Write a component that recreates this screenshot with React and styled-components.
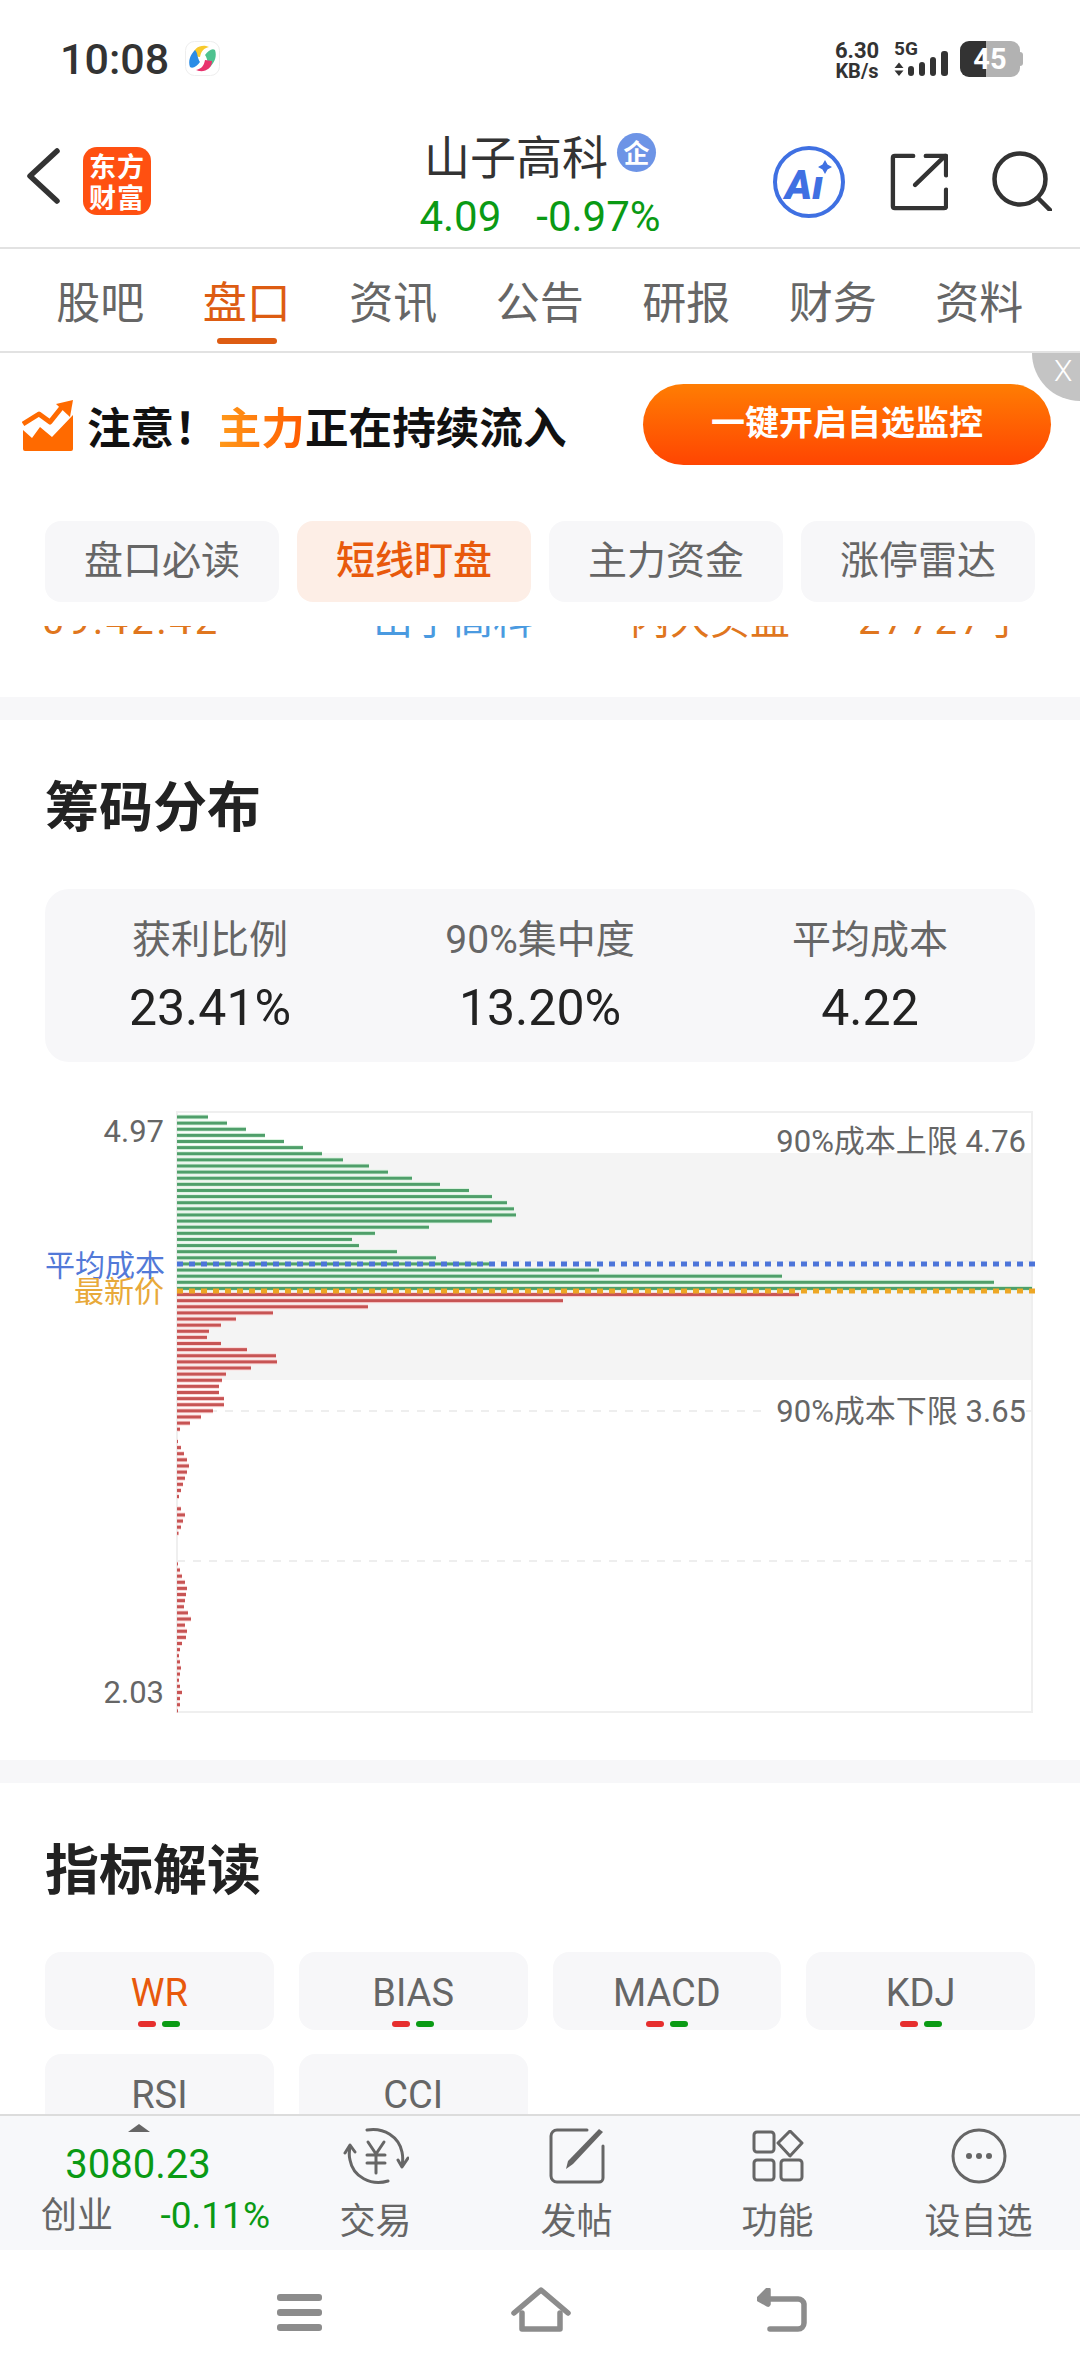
import React from 'react'
import styled, { createGlobalStyle } from 'styled-components'

const GlobalStyle = createGlobalStyle`
  html, body { margin: 0; padding: 0; background: #fff; }
  body { font-family: Roboto, "Noto Sans CJK SC", sans-serif; }
  * { box-sizing: border-box; }
`

const GREEN = '#0a9a14'
const ORANGE = '#e8590c'

const tabs = ['股吧', '盘口', '资讯', '公告', '研报', '财务', '资料']
const chips = ['盘口必读', '短线盯盘', '主力资金', '涨停雷达']
const stats = [
  { label: '获利比例', value: '23.41%' },
  { label: '90%集中度', value: '13.20%' },
  { label: '平均成本', value: '4.22' },
]
const indicators = ['WR', 'BIAS', 'MACD', 'KDJ', 'RSI', 'CCI']

// bar lengths of the chip distribution, top to bottom
const greenBars = [31, 50, 69, 88, 107, 126, 145, 166, 192, 211, 235, 263, 292, 315, 330, 337, 339, 315, 252, 198, 175, 182, 220, 259, 314, 422, 605, 817, 855]
const redBars = [622, 386, 191, 96, 59, 44, 32, 30, 44, 70, 99, 100, 74, 49, 45, 42, 42, 47, 47, 36, 24, 13, 3, 0, 1, 4, 7, 10, 12, 10, 8, 6, 4, 2, 0, 4, 8, 6, 4, 1.5, 0, 0, 0, 0, 1, 3, 5, 8, 10, 9, 8, 7, 11, 14, 8, 10, 9, 5, 3, 2, 3, 4, 3, 2, 3, 5, 3, 3, 1]

const Page = styled.div`
  width: 1080px;
  height: 2376px;
  display: flex;
  flex-direction: column;
  overflow: hidden;
  background: #fff;
  color: #333;
`

const StatusBar = styled.div`
  height: 115px;
  flex: none;
  display: flex;
  align-items: flex-start;
  padding: 39px 60px 0 60px;
`

const Clock = styled.div`
  font-size: 43px;
  line-height: 40px;
  font-weight: 500;
  color: #333;
`

const StatusRight = styled.div`
  margin-left: auto;
  display: flex;
  align-items: flex-start;
  padding-top: 2px;
`

const Speed = styled.div`
  width: 48px;
  margin-right: 13px;
  text-align: center;
  font-weight: 700;
  color: #333;
  white-space: nowrap;
  display: flex;
  flex-direction: column;
  align-items: center;
`

const SpeedValue = styled.span`
  font-size: 22px;
  line-height: 20px;
`

const SpeedUnit = styled.span`
  font-size: 20px;
  line-height: 21px;
`

const Battery = styled.div`
  width: 60px;
  height: 36px;
  margin-left: 10px;
  border-radius: 9px;
  background: linear-gradient(90deg, #333 0 26px, #b2b2b2 26px 100%);
  color: #fff;
  font-size: 29px;
  line-height: 36px;
  font-weight: 700;
  text-align: center;
  position: relative;
  &::after {
    content: '';
    position: absolute;
    right: -3px;
    top: 11px;
    width: 3px;
    height: 14px;
    border-radius: 0 3px 3px 0;
    background: #b2b2b2;
  }
`

const Header = styled.div`
  height: 134px;
  flex: none;
  display: grid;
  grid-template-columns: 1fr auto 1fr;
  border-bottom: 2px solid #e2e2e2;
`

const HeaderLeft = styled.div`
  display: flex;
  align-items: flex-start;
  padding: 32px 0 0 25px;
  gap: 22px;
`

const Logo = styled.div`
  width: 68px;
  height: 68px;
  border-radius: 14px;
  background: #ff5011;
  color: #fff;
  font-size: 27px;
  line-height: 31px;
  font-weight: 700;
  text-align: center;
  padding-top: 3px;
  letter-spacing: 1px;
  font-family: "Noto Sans CJK SC", sans-serif;
`

const HeaderCenter = styled.div`
  display: flex;
  flex-direction: column;
  align-items: center;
  padding-top: 11px;
`

const TitleRow = styled.div`
  display: flex;
  align-items: center;
  gap: 9px;
  height: 56px;
  font-size: 46px;
  color: #333;
  font-family: "Noto Sans CJK SC", sans-serif;
`

const Badge = styled.span`
  width: 39px;
  height: 39px;
  border-radius: 50%;
  background: #6d94e6;
  color: #fff;
  font-size: 26px;
  font-weight: 700;
  line-height: 38px;
  text-align: center;
  margin-top: -3px;
`

const PriceRow = styled.div`
  display: flex;
  gap: 35px;
  margin-top: 13px;
  font-size: 42px;
  line-height: 44px;
  color: ${GREEN};
`

const HeaderRight = styled.div`
  display: flex;
  justify-content: flex-end;
  align-items: flex-start;
  padding: 30px 28px 0 0;
  gap: 44px;
`

const TabBar = styled.div`
  height: 104px;
  flex: none;
  display: flex;
  padding: 0 27px;
  border-bottom: 2px solid #e2e2e2;
`

const Tab = styled.div`
  flex: 0 0 146.5px;
  position: relative;
  text-align: center;
  padding-top: 29px;
  font-size: 44px;
  line-height: 52px;
  color: ${({ $active }) => ($active ? '#dd5c12' : '#666')};
  &::after {
    content: '';
    display: ${({ $active }) => ($active ? 'block' : 'none')};
    position: absolute;
    left: 43px;
    top: 89px;
    width: 60px;
    height: 6px;
    border-radius: 3px;
    background: #dd5c12;
  }
`

const Banner = styled.div`
  height: 168px;
  flex: none;
  position: relative;
  display: flex;
  align-items: flex-start;
  padding: 31px 29px 0 22px;
`

const BannerText = styled.div`
  height: 81px;
  margin-left: 14px;
  display: flex;
  align-items: center;
  padding-top: 1px;
  font-size: 43.6px;
  font-weight: 700;
  color: #111;
  font-family: "Noto Sans CJK SC", sans-serif;
`

const Hot = styled.span`
  background: linear-gradient(90deg, #ff9a1a, #ff5a00);
  -webkit-background-clip: text;
  background-clip: text;
  color: transparent;
`

const MonitorButton = styled.div`
  margin-left: auto;
  width: 408px;
  height: 81px;
  border-radius: 41px;
  background: linear-gradient(180deg, #ff7d03, #ff4502);
  color: #fff;
  font-size: 34px;
  font-weight: 700;
  line-height: 78px;
  text-align: center;
`

const CloseCorner = styled.div`
  position: absolute;
  top: 0;
  right: 0;
  width: 48px;
  height: 48px;
  border-radius: 0 0 0 48px;
  background: #c4c4c4;
  color: #fff;
  font-size: 30px;
  line-height: 24px;
  padding: 6px 0 0 22px;
  font-weight: 300;
`

const ChipRow = styled.div`
  height: 81px;
  flex: none;
  display: grid;
  grid-template-columns: repeat(4, 1fr);
  gap: 18px;
  padding: 0 45px;
`

const Chip = styled.div`
  border-radius: 16px;
  background: ${({ $active }) => ($active ? '#fdeee6' : '#f7f7f9')};
  color: ${({ $active }) => ($active ? ORANGE : '#666')};
  font-weight: ${({ $active }) => ($active ? 500 : 400)};
  font-size: 39px;
  line-height: 81px;
  text-align: center;
`

const Scroll = styled.div`
  flex: 1;
  min-height: 0;
  overflow: hidden;
`

const ClippedList = styled.div`
  margin-top: 24px;
  height: 71px;
  overflow: hidden;
`

const ClippedRow = styled.div`
  margin-top: -27px;
  padding-left: 42px;
  display: grid;
  grid-template-columns: 331px 257px 228px auto;
  font-size: 40px;
  line-height: 44px;
  color: #e0761e;
`

const ClippedCell = styled.span`
  letter-spacing: ${({ $ls }) => $ls || 0}px;
  color: ${({ $blue }) => ($blue ? '#4a9ae0' : 'inherit')};
`

const Gap = styled.div`
  height: 23px;
  background: #f7f7f9;
`

const Section = styled.div`
  padding: 56px 45px ${({ $bottom }) => $bottom}px;
`

const SectionTitle = styled.h2`
  margin: 0 0 ${({ $gap }) => $gap}px;
  font-size: 54px;
  line-height: 56px;
  font-weight: 700;
  color: #222;
  font-family: "Noto Sans CJK SC", sans-serif;
`

const StatCard = styled.div`
  height: 173px;
  border-radius: 24px;
  background: #f7f7f9;
  display: grid;
  grid-template-columns: repeat(3, 1fr);
  padding-top: 27px;
`

const Stat = styled.div`
  text-align: center;
`

const StatLabel = styled.div`
  font-size: 39px;
  line-height: 48px;
  color: #666;
`

const StatValue = styled.div`
  font-size: 50px;
  line-height: 60px;
  margin-top: 14px;
  font-weight: 400;
  color: #222;
`

const Chart = styled.div`
  position: relative;
  height: 602px;
  margin-top: 49px;
`

const ChartSvg = styled.svg`
  display: block;
  width: 990px;
  height: 602px;
`

const AxisLabel = styled.div`
  position: absolute;
  left: 0;
  top: ${({ $top }) => $top}px;
  width: 119px;
  text-align: right;
  font-size: ${({ $size }) => $size || 30}px;
  line-height: 36px;
  white-space: nowrap;
  color: ${({ $color }) => $color || '#666'};
`

const BandLabel = styled.div`
  position: absolute;
  right: 9px;
  top: ${({ $top }) => $top}px;
  padding-left: 8px;
  font-size: 31px;
  line-height: 36px;
  color: #666;
  background: ${({ $plain }) => ($plain ? 'transparent' : '#fff')};
`

const IndicatorGrid = styled.div`
  display: grid;
  grid-template-columns: repeat(4, 1fr);
  gap: 24px 25px;
`

const Indicator = styled.div`
  height: 78px;
  border-radius: 16px;
  background: #f7f7f9;
  padding-top: 18px;
  display: flex;
  flex-direction: column;
  align-items: center;
  font-size: 38px;
  line-height: 46px;
  color: ${({ $active }) => ($active ? ORANGE : '#666')};
`

const Dots = styled.div`
  display: flex;
  gap: 6px;
  margin-top: 5px;
`

const Dot = styled.span`
  width: 18px;
  height: 6px;
  border-radius: 3px;
  background: ${({ $red }) => ($red ? '#e62e2e' : GREEN)};
`

const BottomBar = styled.div`
  height: 136px;
  flex: none;
  display: flex;
  background: #f7f8fa;
  border-top: 2px solid #dcdcdc;
`

const IndexBlock = styled.div`
  width: 275px;
  flex: none;
  padding: 8px 0 0 41px;
  position: relative;
`

const IndexArrow = styled.div`
  width: 0;
  height: 0;
  margin-left: 87px;
  border-left: 11px solid transparent;
  border-right: 11px solid transparent;
  border-bottom: 8px solid #666;
`

const IndexValue = styled.div`
  width: 194px;
  text-align: center;
  margin-top: 10px;
  font-size: 40px;
  line-height: 46px;
  color: ${GREEN};
`

const IndexRow = styled.div`
  display: flex;
  justify-content: space-between;
  width: 229px;
  margin-top: 6px;
  line-height: 44px;
`

const IndexName = styled.span`
  font-size: 36px;
  color: #666;
`

const IndexChange = styled.span`
  font-size: 37px;
  color: ${GREEN};
`

const BarItem = styled.div`
  flex: 0 0 201px;
  display: flex;
  flex-direction: column;
  align-items: center;
  padding-top: 10px;
  font-size: 36px;
  line-height: 42px;
  color: #666;
`

const BarIcon = styled.div`
  height: 60px;
  margin-bottom: 15px;
  display: flex;
  align-items: center;
`

const NavBar = styled.div`
  flex: none;
  height: 126px;
  position: relative;
  display: flex;
  align-items: flex-start;
  padding: 44px 0 0 277px;
`

const BackIcon = () => (
  <svg width="36" height="58" viewBox="0 0 36 58" fill="none" stroke="#333" strokeWidth="5.5" strokeLinecap="round" strokeLinejoin="round">
    <path d="M32 4 5 29l27 25" />
  </svg>
)

const AppDot = () => (
  <svg width="35" height="35" viewBox="0 0 35 35" style={{ marginLeft: 16, marginTop: 2 }}>
    <rect x="0.5" y="0.5" width="34" height="34" rx="9" fill="#fff" stroke="#eee" />
    <path d="M8 15c0-7 6-11 13-10l3 1c-5 1-8 4-9 10z" fill="#f7c92c" />
    <path d="M20 14c3-4 7-7 10-5 2 6 0 12-5 17-3-3-2-8-5-12z" fill="#4ec28f" />
    <path d="M27 20c0 7-6 11-13 10l-3-1c5-1 8-4 9-10z" fill="#e8336d" />
    <path d="M15 21c-3 4-7 7-10 5-2-6 0-12 5-17 3 3 2 8 5 12z" fill="#2b8ce6" />
  </svg>
)

const NetIcon = () => (
  <svg width="56" height="38" viewBox="0 0 56 38" fill="#333">
    <text x="0" y="14" fontSize="19" fontWeight="700" fontFamily="Roboto, sans-serif">5G</text>
    <path d="M5 21.5 9.5 27h-9zM5 35 .5 29.5h9z" />
    <rect x="14" y="25" width="6" height="10" rx="3" />
    <rect x="25" y="21" width="6" height="14" rx="3" />
    <rect x="36" y="16" width="6" height="19" rx="3" />
    <rect x="47" y="10" width="7" height="25" rx="3" />
  </svg>
)

const AiIcon = () => (
  <svg width="74" height="74" viewBox="0 0 74 74">
    <circle cx="37" cy="37" r="34" fill="#fff" stroke="#3f70e2" strokeWidth="4" />
    <text x="13" y="54" fontSize="41" fontWeight="900" fontStyle="italic" fill="#3f70e2" fontFamily="Roboto, sans-serif">Aı</text>
    <path d="M53 15l2.5 4.5 4.5 2.5-4.5 2.5-2.5 4.5-2.5-4.5-4.5-2.5 4.5-2.5z" fill="#3f70e2" />
  </svg>
)

const ShareIcon = () => (
  <svg width="58" height="58" viewBox="0 0 60 60" fill="none" stroke="#333" strokeWidth="4.5" strokeLinecap="round" strokeLinejoin="round" style={{ marginTop: 8 }}>
    <path d="M24 3H5a2 2 0 0 0-2 2v50a2 2 0 0 0 2 2h51a2 2 0 0 0 2-2V38" />
    <path d="M26 33 57 3M37 3h21v20" />
  </svg>
)

const SearchIcon = () => (
  <svg width="60" height="60" viewBox="0 0 60 60" fill="none" stroke="#333" strokeWidth="4.5" strokeLinecap="round" style={{ marginTop: 6 }}>
    <circle cx="28" cy="28" r="25.5" />
    <path d="M46 47 58 59" />
  </svg>
)

const TrendIcon = () => (
  <svg width="51" height="51" viewBox="0 0 51 51" style={{ marginTop: 16, flex: 'none' }}>
    <path d="M1 30l9 8 8-11 12 10 21-22v34a2 2 0 0 1-2 2H3a2 2 0 0 1-2-2z" fill="#ff6a00" />
    <path d="M1 24l16-10 11 8 12-15" fill="none" stroke="#ff6a00" strokeWidth="5" strokeLinejoin="round" />
    <path d="M51 0 34 4l14 13z" fill="#ff6a00" />
  </svg>
)

const TradeIcon = () => (
  <svg width="66" height="58" viewBox="0 0 66 58" fill="none" stroke="#666" strokeWidth="3" strokeLinecap="round" strokeLinejoin="round">
    <path d="M24 3c17-3 32 7 35 22 1 5 1 9 0 13" />
    <path d="M65 31l-6 9-4-7" />
    <path d="M45 54C28 59 10 50 7 33c-1-4-1-8 0-12" />
    <path d="M2 26l5-8 5 7" />
    <path d="M25 15l8 12 8-12M33 27v19M24 28h18M24 36h18" />
  </svg>
)

const PostIcon = () => (
  <svg width="56" height="56" viewBox="0 0 56 56" fill="none" stroke="#666" strokeWidth="3" strokeLinecap="round" strokeLinejoin="round">
    <path d="M38 2H8a6 6 0 0 0-6 6v40a6 6 0 0 0 6 6h42a4 4 0 0 0 4-4V18" />
    <path d="M50 1 54 4 24 36l-7 5 2-8z" fill="#666" stroke="none" />
  </svg>
)

const FuncIcon = () => (
  <svg width="52" height="52" viewBox="0 0 52 52" fill="none" stroke="#666" strokeWidth="3" strokeLinejoin="round">
    <rect x="2" y="2" width="20" height="20" rx="3" />
    <path d="M38 1l12 12-12 13-12-13z" />
    <rect x="2" y="30" width="20" height="20" rx="3" />
    <rect x="29" y="30" width="21" height="20" rx="3" />
  </svg>
)

const MoreIcon = () => (
  <svg width="56" height="56" viewBox="0 0 56 56" fill="#666">
    <circle cx="28" cy="28" r="26" fill="none" stroke="#666" strokeWidth="3" />
    <circle cx="18" cy="28" r="3" />
    <circle cx="28" cy="28" r="3" />
    <circle cx="38" cy="28" r="3" />
  </svg>
)

const MenuIcon = () => (
  <svg width="45" height="37" viewBox="0 0 45 37" fill="#8c8c8c">
    <rect width="45" height="7" rx="3" />
    <rect y="15" width="45" height="7" rx="3" />
    <rect y="30" width="45" height="7" rx="3" />
  </svg>
)

const HomeIcon = () => (
  <svg width="60" height="45" viewBox="0 0 60 45" fill="none" stroke="#8c8c8c" strokeWidth="5.5" strokeLinecap="round" strokeLinejoin="round" style={{ marginLeft: 189, marginTop: -7 }}>
    <path d="M3 26 30 3l27 23" />
    <path d="M11 26v16h38V26" />
  </svg>
)

const ReturnIcon = () => (
  <svg width="50" height="44" viewBox="0 0 50 44" fill="none" stroke="#8c8c8c" strokeWidth="5.5" strokeLinecap="round" strokeLinejoin="round" style={{ marginLeft: 186, marginTop: -6 }}>
    <path d="M8 11h33a6 6 0 0 1 6 5v19a6 6 0 0 1-6 6H13" />
    <path d="M11 2 2 11l9 5z" fill="#8c8c8c" />
  </svg>
)

const ChipChart = () => {
  const left = 132
  const rowY = (i) => 6 + i * 6.122
  const dashes = Array.from({ length: 72 }, (_, i) => left + i * 12)
  return (
    <Chart>
      <ChartSvg viewBox="0 0 990 602">
        <rect x={left} y="42" width="855" height="227" fill="#f4f4f4" />
        <rect x={left} y="1" width="855" height="600" fill="none" stroke="#efefef" strokeWidth="2" />
        {[150, 300, 450].map((y) => (
          <line key={y} x1={left} x2={left + 855} y1={y} y2={y} stroke="#eee" strokeWidth="2" strokeDasharray="8 8" />
        ))}
        {greenBars.map((w, i) => (
          <g key={i}>
            <rect x={left} y={rowY(i) - 2.5} width={w} height="5" fill="#dff5e4" />
            <rect x={left} y={rowY(i) - 1.5} width={w} height="3" fill="#4f9f6a" />
          </g>
        ))}
        {redBars.map((w, i) =>
          w > 0 ? (
            <g key={i}>
              <rect x={left} y={rowY(i + 29) - 2.5} width={w} height="5" fill="#fbd9d9" />
              <rect x={left} y={rowY(i + 29) - 1.5} width={w} height="3" fill="#c75454" />
            </g>
          ) : null,
        )}
        {dashes.map((x) => (
          <rect key={x} x={x} y="150.5" width="6" height="5" fill="#4c74d9" />
        ))}
        {dashes.map((x) => (
          <rect key={x} x={x} y="177.5" width="6" height="5" fill="#eda726" />
        ))}
      </ChartSvg>
      <AxisLabel $top={3} $size={31}>4.97</AxisLabel>
      <AxisLabel $top={137} $color="#5279d8">平均成本</AxisLabel>
      <AxisLabel $top={163} $color="#e8a93a">最新价</AxisLabel>
      <AxisLabel $top={564} $size={31}>2.03</AxisLabel>
      <BandLabel $top={13} $plain>90%成本上限 4.76</BandLabel>
      <BandLabel $top={283}>90%成本下限 3.65</BandLabel>
    </Chart>
  )
}

export default function App() {
  return (
    <Page>
      <GlobalStyle />
      <StatusBar>
        <Clock>10:08</Clock>
        <AppDot />
        <StatusRight>
          <Speed>
            <SpeedValue>6.30</SpeedValue>
            <SpeedUnit>KB/s</SpeedUnit>
          </Speed>
          <NetIcon />
          <Battery>45</Battery>
        </StatusRight>
      </StatusBar>

      <Header>
        <HeaderLeft>
          <BackIcon />
          <Logo>东方<br />财富</Logo>
        </HeaderLeft>
        <HeaderCenter>
          <TitleRow>山子高科<Badge>企</Badge></TitleRow>
          <PriceRow><span>4.09</span><span>-0.97%</span></PriceRow>
        </HeaderCenter>
        <HeaderRight>
          <AiIcon />
          <ShareIcon />
          <SearchIcon />
        </HeaderRight>
      </Header>

      <TabBar>
        {tabs.map((t) => (
          <Tab key={t} $active={t === '盘口'}>{t}</Tab>
        ))}
      </TabBar>

      <Banner>
        <TrendIcon />
        <BannerText>注意！<Hot>主力</Hot>正在持续流入</BannerText>
        <MonitorButton>一键开启自选监控</MonitorButton>
        <CloseCorner>X</CloseCorner>
      </Banner>

      <ChipRow>
        {chips.map((c) => (
          <Chip key={c} $active={c === '短线盯盘'}>{c}</Chip>
        ))}
      </ChipRow>

      <Scroll>
        <ClippedList>
          <ClippedRow>
            <ClippedCell $ls={3}>09:42:42</ClippedCell>
            <ClippedCell $blue>山子高科</ClippedCell>
            <ClippedCell>内大买盘</ClippedCell>
            <ClippedCell $ls={3}>27727手</ClippedCell>
          </ClippedRow>
        </ClippedList>
        <Gap />

        <Section $bottom={47}>
          <SectionTitle $gap={57}>筹码分布</SectionTitle>
          <StatCard>
            {stats.map((s) => (
              <Stat key={s.label}>
                <StatLabel>{s.label}</StatLabel>
                <StatValue>{s.value}</StatValue>
              </Stat>
            ))}
          </StatCard>
          <ChipChart />
        </Section>
        <Gap />

        <Section $bottom={0}>
          <SectionTitle $gap={57}>指标解读</SectionTitle>
          <IndicatorGrid>
            {indicators.map((name) => (
              <Indicator key={name} $active={name === 'WR'}>
                {name}
                <Dots><Dot $red /><Dot /></Dots>
              </Indicator>
            ))}
          </IndicatorGrid>
        </Section>
      </Scroll>

      <BottomBar>
        <IndexBlock>
          <IndexArrow />
          <IndexValue>3080.23</IndexValue>
          <IndexRow>
            <IndexName>创业</IndexName>
            <IndexChange>-0.11%</IndexChange>
          </IndexRow>
        </IndexBlock>
        <BarItem><BarIcon><TradeIcon /></BarIcon>交易</BarItem>
        <BarItem><BarIcon><PostIcon /></BarIcon>发帖</BarItem>
        <BarItem><BarIcon><FuncIcon /></BarIcon>功能</BarItem>
        <BarItem><BarIcon><MoreIcon /></BarIcon>设自选</BarItem>
      </BottomBar>

      <NavBar>
        <MenuIcon />
        <HomeIcon />
        <ReturnIcon />
      </NavBar>
    </Page>
  )
}
